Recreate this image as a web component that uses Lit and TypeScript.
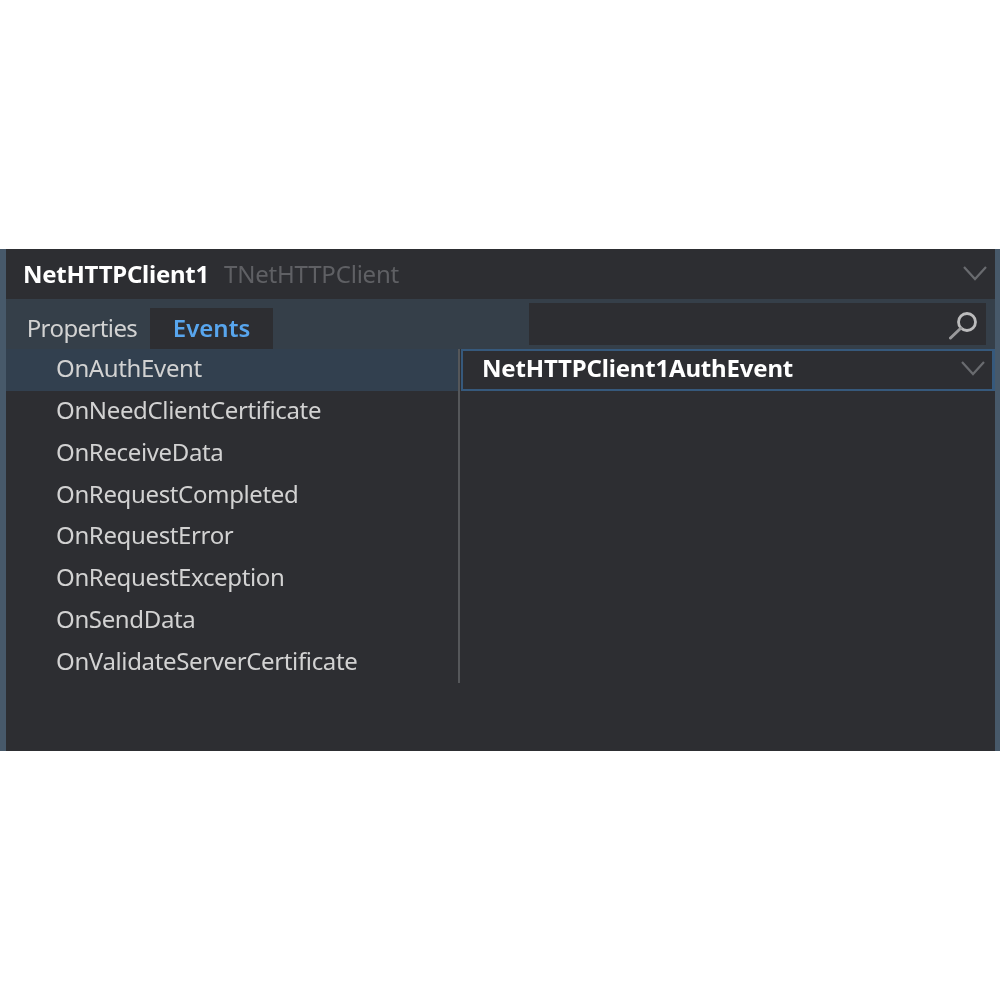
import { LitElement, html, css } from 'lit';
import { customElement } from 'lit/decorators.js';

const EVENTS = [
  'OnAuthEvent',
  'OnNeedClientCertificate',
  'OnReceiveData',
  'OnRequestCompleted',
  'OnRequestError',
  'OnRequestException',
  'OnSendData',
  'OnValidateServerCertificate',
];

const chevron = html`<svg class="chevron" width="26" height="16" viewBox="0 0 26 16">
  <path d="M2 2 L13 14 L24 2" fill="none" stroke="#696b6f" stroke-width="2.2" />
</svg>`;

@customElement('app-root')
export class AppRoot extends LitElement {
  static styles = css`
    :host {
      display: block;
      width: 1000px;
      height: 1000px;
      background: #fff;
      padding-top: 249px;
      box-sizing: border-box;
      font-family: 'Noto Sans', 'Open Sans', sans-serif;
      font-size: 24px;
      color: #d2d2d2;
    }
    .panel {
      height: 502px;
      box-sizing: border-box;
      border-left: 6px solid #47596a;
      border-right: 5px solid #47596a;
      background: #2d2e32;
      display: flex;
      flex-direction: column;
      filter: blur(0.5px);
    }
    .header {
      height: 50px;
      flex: none;
      display: flex;
      align-items: center;
      padding: 0 7px 2px 17px;
      box-sizing: border-box;
      gap: 15px;
    }
    .name {
      font-weight: 700;
      color: #fff;
      letter-spacing: -0.25px;
    }
    .type {
      color: #5f6064;
      letter-spacing: -0.2px;
      flex: 1;
    }
    .tabs {
      height: 50px;
      flex: none;
      box-sizing: border-box;
      background: #353f49;
      display: flex;
      align-items: flex-end;
    }
    .tab {
      height: 41px;
      display: flex;
      align-items: center;
      justify-content: center;
      box-sizing: border-box;
      padding-bottom: 3px;
    }
    .tab.plain {
      width: 144px;
      padding-left: 8px;
      letter-spacing: -0.6px;
    }
    .tab.active {
      width: 123px;
      background: #2d2e32;
      color: #58a6ee;
      font-weight: 600;
    }
    .search {
      margin: 0 9px 4px auto;
      width: 457px;
      height: 42px;
      background: #2d2e32;
      display: flex;
      align-items: center;
      justify-content: flex-end;
      padding-right: 7px;
      box-sizing: border-box;
    }
    .list {
      display: grid;
      grid-template-columns: 452px 1fr;
      grid-auto-rows: 41.75px;
    }
    .cell {
      display: flex;
      align-items: center;
      padding: 0 0 4px 50px;
      letter-spacing: -0.36px;
    }
    .cell.selected {
      background: #32404f;
    }
    .value {
      border-left: 2px solid #55575a;
      min-width: 0;
    }
    .editor {
      height: 100%;
      box-sizing: border-box;
      border: 2px solid #36597c;
      border-right-width: 3px;
      margin-left: 1px;
      display: flex;
      align-items: center;
      justify-content: space-between;
      padding: 0 6px 4px 19px;
      font-weight: 700;
      color: #fff;
      letter-spacing: -0.18px;
    }
  `;

  render() {
    return html`
      <div class="panel">
        <div class="header">
          <span class="name">NetHTTPClient1</span>
          <span class="type">TNetHTTPClient</span>
          ${chevron}
        </div>
        <div class="tabs">
          <div class="tab plain">Properties</div>
          <div class="tab active">Events</div>
          <div class="search">
            <svg width="30" height="32" viewBox="0 0 30 32">
              <circle cx="18" cy="14" r="8.5" fill="none" stroke="#bcbcbd" stroke-width="2.8" />
              <path d="M12 20 L1.5 30" stroke="#9a9a9c" stroke-width="3" stroke-linecap="round" />
            </svg>
          </div>
        </div>
        <div class="list">
          ${EVENTS.map((name, i) =>
            i === 0
              ? html`<div class="cell selected">${name}</div>
                  <div class="value">
                    <div class="editor"><span>NetHTTPClient1AuthEvent</span>${chevron}</div>
                  </div>`
              : html`<div class="cell">${name}</div>
                  <div class="value"></div>`
          )}
        </div>
      </div>
    `;
  }
}
